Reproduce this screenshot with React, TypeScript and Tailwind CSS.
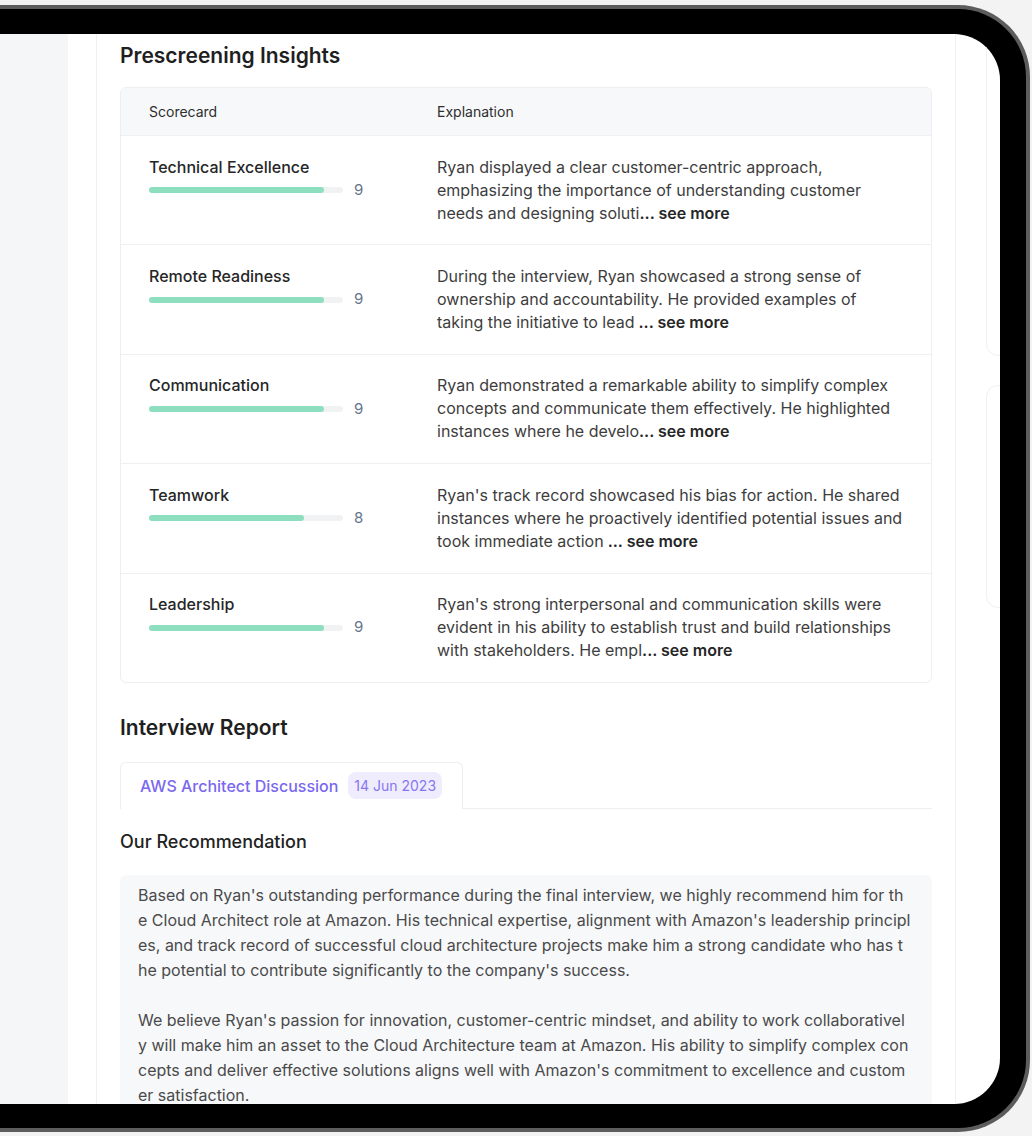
type Score = {
  title: string;
  score: number;
  text: string;
  gap?: boolean;
};

const scores: Score[] = [
  {
    title: "Technical Excellence",
    score: 9,
    text: "Ryan displayed a clear customer-centric approach, emphasizing the importance of understanding customer needs and designing soluti",
  },
  {
    title: "Remote Readiness",
    score: 9,
    text: "During the interview, Ryan showcased a strong sense of ownership and accountability. He provided examples of taking the initiative to lead",
    gap: true,
  },
  {
    title: "Communication",
    score: 9,
    text: "Ryan demonstrated a remarkable ability to simplify complex concepts and communicate them effectively. He highlighted instances where he develo",
  },
  {
    title: "Teamwork",
    score: 8,
    text: "Ryan's track record showcased his bias for action. He shared instances where he proactively identified potential issues and took immediate action",
    gap: true,
  },
  {
    title: "Leadership",
    score: 9,
    text: "Ryan's strong interpersonal and communication skills were evident in his ability to establish trust and build relationships with stakeholders. He empl",
  },
];

const recommendation = [
  "Based on Ryan's outstanding performance during the final interview, we highly recommend him for the Cloud Architect role at Amazon. His technical expertise, alignment with Amazon's leadership principles, and track record of successful cloud architecture projects make him a strong candidate who has the potential to contribute significantly to the company's success.",
  "We believe Ryan's passion for innovation, customer-centric mindset, and ability to work collaboratively will make him an asset to the Cloud Architecture team at Amazon. His ability to simplify complex concepts and deliver effective solutions aligns well with Amazon's commitment to excellence and customer satisfaction.",
];

const ScoreRow = ({ title, score, text, gap }: Score) => (
  <div className="grid grid-cols-[288px_1fr] border-t border-[#eef0f2] py-[19.7px]">
    <div className="px-7">
      <div className="text-[16px] leading-[23px] font-medium text-[#262626]">{title}</div>
      <div className="flex items-center h-[23px]">
        <div className="w-[194px] h-[6px] rounded-full bg-[#f1f2f4]">
          <div
            className="h-full rounded-full bg-[#8ddfbf]"
            style={{ width: `${score * 10}%` }}
          />
        </div>
        <span className="ml-[11px] text-[15px] text-[#64748b]">{score}</span>
      </div>
    </div>
    <p className="pl-7 pr-7 text-[16px] leading-[23px] text-[#3d3d3d]">
      {text}
      <span className="font-semibold text-[#262626]">{gap ? " ... see more" : "... see more"}</span>
    </p>
  </div>
);

export default function App() {
  return (
    <div className="w-[1032px] h-[1136px] bg-[#f3f3f3] overflow-hidden font-['Inter',sans-serif]">
      <div className="mt-[5px] w-[1030px] h-[1127px] bg-black border-y-4 border-r-4 border-[#5c5c5c] rounded-r-[72px] pt-[25px] pr-[26px] pb-[24px]">
        <div className="h-full w-full bg-white rounded-r-[46px] overflow-hidden flex">
          <aside className="w-[68px] shrink-0 bg-[#f5f6f8]" />
          <div className="w-[28px] shrink-0" />

          <main className="w-[860px] shrink-0 border-x border-[#eef0f2] px-[23px] pt-[8px]">
            <h2 className="text-[21px] leading-[28px] font-semibold text-[#1f1f1f]">
              Prescreening Insights
            </h2>

            <div className="mt-[17px] rounded-md border border-[#eceef1] overflow-hidden">
              <div className="grid grid-cols-[288px_1fr] h-[47px] items-center bg-[#f7f8fa] text-[14px] text-[#2e2e2e]">
                <span className="px-7">Scorecard</span>
                <span className="px-7">Explanation</span>
              </div>
              {scores.map((s) => (
                <ScoreRow key={s.title} {...s} />
              ))}
            </div>

            <h2 className="mt-[31px] text-[21px] leading-[28px] font-semibold text-[#1f1f1f]">
              Interview Report
            </h2>

            <div className="mt-[20px] flex">
              <div className="flex items-center h-[47px] pl-[19px] pr-[20px] border border-b-0 border-[#eceef1] rounded-t-md">
                <span className="text-[16px] font-medium text-[#7a68f0]">
                  AWS Architect Discussion
                </span>
                <span className="ml-[10px] h-[27px] px-[6px] flex items-center rounded-lg bg-[#efedfd] text-[14px] text-[#8676f0]">
                  14 Jun 2023
                </span>
              </div>
              <div className="flex-1 border-b border-[#eceef1]" />
            </div>

            <h3 className="mt-[21px] text-[18px] leading-[24px] font-medium text-[#222222]">
              Our Recommendation
            </h3>

            <div className="mt-[21px] rounded-md bg-[#f7f8fa] pl-[18px] pr-[20.5px] pt-[8px] pb-[20px] text-[16px] leading-[25px] text-[#4a4a4a] break-all">
              {recommendation.map((p, i) => (
                <p key={i} className={i > 0 ? "mt-[25px]" : ""}>
                  {p}
                </p>
              ))}
            </div>
          </main>

          <div className="w-[30px] shrink-0" />

          <aside className="w-[220px] shrink-0 -mt-[20px] flex flex-col gap-[29px]">
            <div className="h-[342px] rounded-xl border border-[#eff0f3]" />
            <div className="h-[223px] rounded-xl border border-[#eff0f3]" />
          </aside>
        </div>
      </div>
    </div>
  );
}
